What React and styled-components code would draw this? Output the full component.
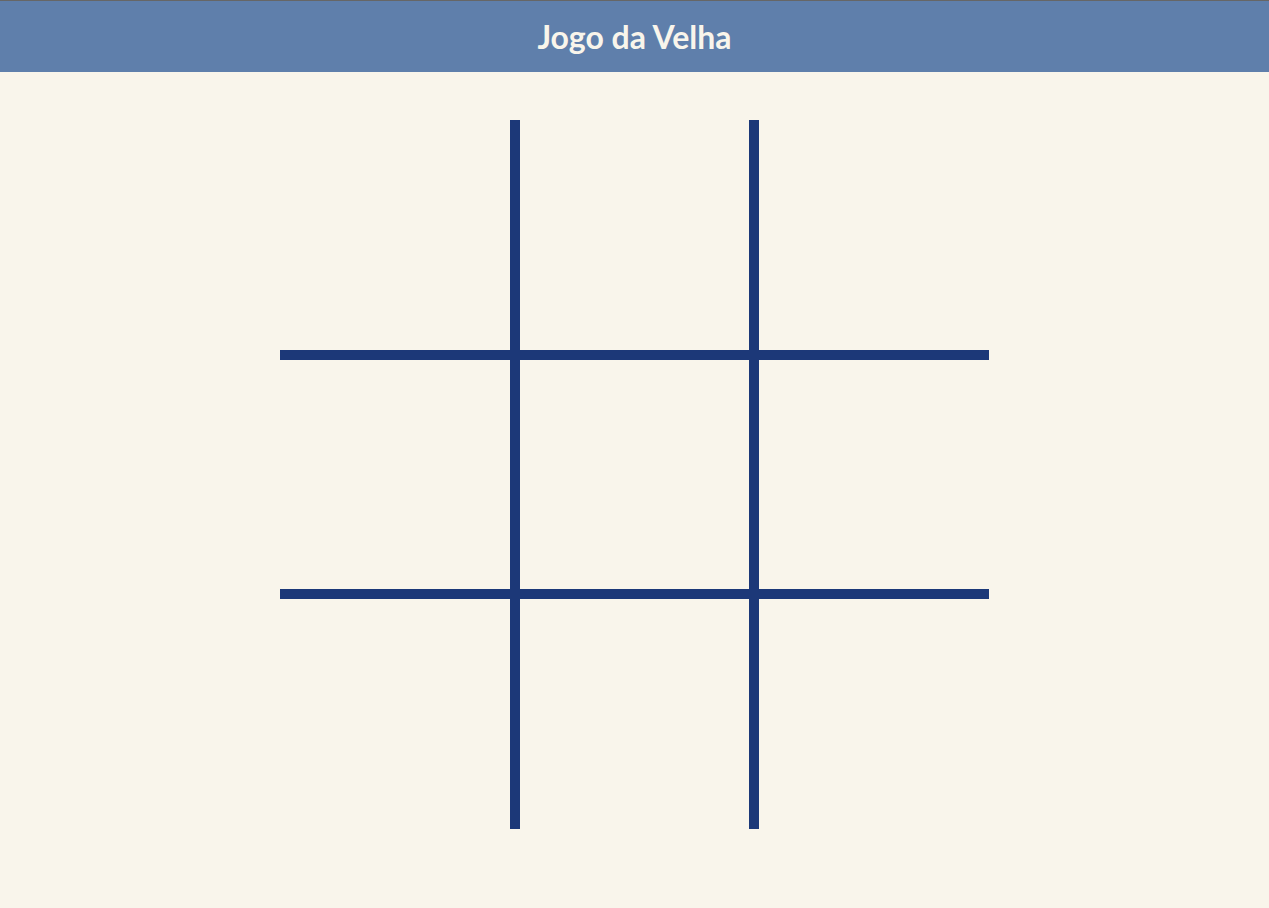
import React from 'react';
import styled, { createGlobalStyle } from 'styled-components';

const GlobalStyle = createGlobalStyle`
  html, body {
    margin: 0;
    padding: 0;
    background: #f9f5eb;
    font-family: Lato, "Noto Sans", sans-serif;
  }
  * {
    box-sizing: border-box;
  }
`;

const Page = styled.div`
  min-height: 100vh;
  background: #f9f5eb;
`;

const Header = styled.header`
  height: 72px;
  background: #5f7fab;
  border-top: 1px solid #666666;
  display: flex;
  align-items: center;
  justify-content: center;
`;

const Title = styled.h1`
  margin: 0;
  font-size: 32px;
  font-weight: 700;
  color: #f9f5eb;
  line-height: 1;
`;

const Main = styled.main`
  display: flex;
  justify-content: center;
  padding-top: 48px;
`;

const Board = styled.div`
  width: 709px;
  height: 709px;
  display: grid;
  grid-template-columns: 230px 229px 230px;
  grid-template-rows: 230px 229px 230px;
  gap: 10px;
  background: #1c3878;
`;

const Cell = styled.button`
  border: none;
  padding: 0;
  margin: 0;
  background: #f9f5eb;
  cursor: pointer;
  font-family: inherit;
  font-size: 120px;
  font-weight: 700;
  color: #1c3878;
`;

function App() {
  const cells = Array.from({ length: 9 }, (_, i) => i);

  return (
    <Page>
      <GlobalStyle />
      <Header>
        <Title>Jogo da Velha</Title>
      </Header>
      <Main>
        <Board>
          {cells.map(i => (
            <Cell key={i} aria-label={`Casa ${i + 1}`} />
          ))}
        </Board>
      </Main>
    </Page>
  );
}

export default App;
